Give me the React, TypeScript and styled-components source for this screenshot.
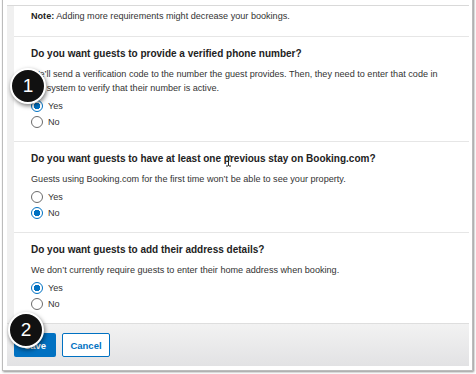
import styled, { createGlobalStyle } from 'styled-components';

const Global = createGlobalStyle`
  * { box-sizing: border-box; }
  html, body { margin: 0; padding: 0; background: #fff; overflow: hidden; }
  body { font-family: "Liberation Sans", Arial, sans-serif; }
`;

type Question = {
  title: string;
  lines: string[];
  answer: 'yes' | 'no';
};

const questions: Question[] = [
  {
    title: 'Do you want guests to provide a verified phone number?',
    lines: [
      'We\u2019ll send a verification code to the number the guest provides. Then, they need to enter that code in',
      'our system to verify that their number is active.',
    ],
    answer: 'yes',
  },
  {
    title: 'Do you want guests to have at least one previous stay on Booking.com?',
    lines: ['Guests using Booking.com for the first time won\u2019t be able to see your property.'],
    answer: 'no',
  },
  {
    title: 'Do you want guests to add their address details?',
    lines: ['We don\u2019t currently require guests to enter their home address when booking.'],
    answer: 'yes',
  },
];

const App = () => {
  return (
    <Page>
      <Global />
      <Frame>
        <Panel>
          <Body>
            <NoteSection>
              <NoteText>
                <b>Note:</b> Adding more requirements might decrease your bookings.
              </NoteText>
            </NoteSection>
            {questions.map((q, i) => (
              <Section key={q.title} isLast={i === questions.length - 1}>
                <Heading>{q.title}</Heading>
                <Desc>
                  {q.lines.map(line => (
                    <DescLine key={line}>{line}</DescLine>
                  ))}
                </Desc>
                <Options>
                  <Option>
                    <Radio checked={q.answer === 'yes'} />
                    Yes
                  </Option>
                  <Option>
                    <Radio checked={q.answer === 'no'} />
                    No
                  </Option>
                </Options>
              </Section>
            ))}
          </Body>
          <Footer>
            <SaveButton>Save</SaveButton>
            <CancelButton>Cancel</CancelButton>
          </Footer>
        </Panel>
      </Frame>
      <Badge x={10} y={68}>1</Badge>
      <Badge x={8} y={312}>2</Badge>
      <Cursor viewBox="0 0 7 12" width={7} height={12}>
        <path d="M1 1h2l0.5 0.6L4 1h2M3.5 1.6v8.8M1 11h2l0.5-0.6L4 11h2" fill="none" stroke="#222" strokeWidth="1" />
      </Cursor>
    </Page>
  );
};

const Page = styled.div`
  position: relative;
  width: 476px;
  height: 374px;
  overflow: hidden;
  background: #fff;
`;

const Frame = styled.div`
  margin-left: 2px;
  margin-top: -20px;
  width: 471px;
  padding: 25px 3px 4px 4px;
  background: #fff;
  border: 1px solid #bcbcbc;
  border-top: none;
  box-shadow: 1px 1px 2px rgba(0, 0, 0, 0.45);
`;

const Panel = styled.div`
  border-top: 1px solid #d9d9d9;
  display: flex;
  flex-direction: column;
`;

const Body = styled.div`
  border-left: 7px solid #f0f0f0;
`;

const NoteSection = styled.div`
  padding: 3px 17px 13px;
  border-bottom: 1px solid #e6e6e6;
`;

const NoteText = styled.div`
  font-size: 9.1px;
  line-height: 14px;
  color: #333;
  b { color: #222; }
`;

const Section = styled.div<{ isLast?: boolean }>`
  padding: 9px 17px 11px;
  border-bottom: ${p => (p.isLast ? 'none' : '1px solid #e6e6e6')};
`;

const Heading = styled.div`
  font-size: 10px;
  font-weight: bold;
  line-height: 16px;
  color: #222;
`;

const Desc = styled.div`
  margin-top: 5px;
  font-size: 9.1px;
  line-height: 14px;
  color: #333;
`;

const DescLine = styled.div`
  white-space: nowrap;
`;

const Options = styled.div`
  margin-top: 3px;
  display: flex;
  flex-direction: column;
`;

const Option = styled.label`
  display: flex;
  align-items: center;
  gap: 5px;
  height: 16px;
  font-size: 9.1px;
  color: #333;
`;

const Radio = styled.span<{ checked?: boolean }>`
  width: 12px;
  height: 12px;
  border-radius: 50%;
  border: ${p => (p.checked ? '1.5px solid #0071c2' : '1px solid #6b6b6b')};
  background: ${p => (p.checked ? 'radial-gradient(circle, #0071c2 0 3px, #fff 3.5px)' : '#fff')};
  flex: none;
`;

const Footer = styled.div`
  display: flex;
  gap: 6px;
  padding: 9px 7px;
  border-top: 1px solid #dedede;
  background: linear-gradient(#f2f2f2, #e2e2e4);
`;

const SaveButton = styled.button`
  width: 42px;
  height: 24px;
  border: none;
  border-radius: 2px;
  background: #0071c2;
  color: #fff;
  font-family: "Liberation Sans", Arial, sans-serif;
  font-size: 9.5px;
  font-weight: bold;
  padding: 0;
`;

const CancelButton = styled.button`
  width: 48px;
  height: 24px;
  border: 1px solid #0071c2;
  border-radius: 2px;
  background: #fff;
  color: #0071c2;
  font-family: "Liberation Sans", Arial, sans-serif;
  font-size: 9.5px;
  font-weight: bold;
  padding: 0;
`;

const Badge = styled.div<{ x: number; y: number }>`
  position: absolute;
  left: ${p => p.x}px;
  top: ${p => p.y}px;
  width: 36px;
  height: 36px;
  border-radius: 50%;
  background: #111;
  border: 2px solid #fff;
  box-shadow: 1px 2px 4px rgba(0, 0, 0, 0.5);
  color: #fff;
  font-family: "Liberation Sans", Arial, sans-serif;
  font-size: 19px;
  display: flex;
  align-items: center;
  justify-content: center;
`;

const Cursor = styled.svg`
  position: absolute;
  left: 225px;
  top: 155px;
`;

export default App;
